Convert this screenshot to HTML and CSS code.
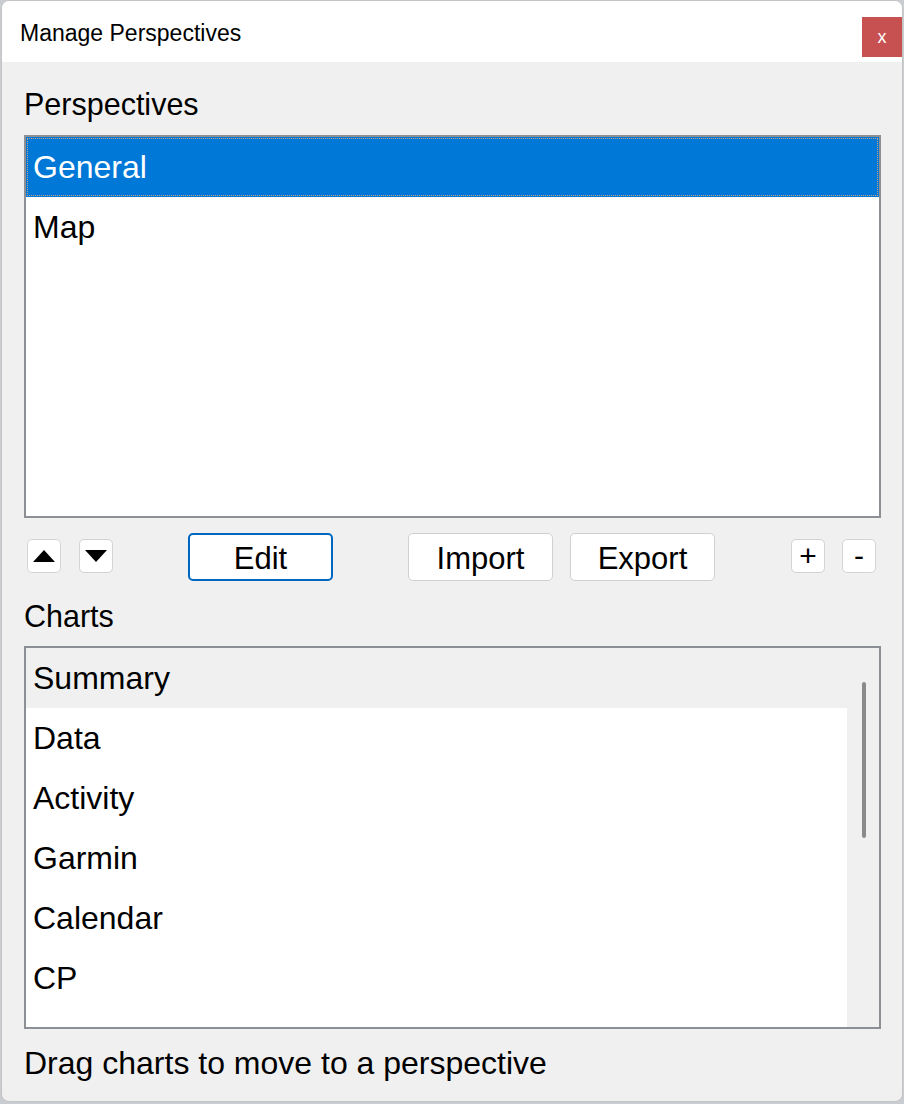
FILE: index.html
```html
<!DOCTYPE html>
<html>
<head>
<meta charset="utf-8">
<title>Manage Perspectives</title>
<link rel="stylesheet" href="styles.css">
</head>
<body>
<div class="window">
  <div class="titlebar">
    <span class="title">Manage Perspectives</span>
    <button class="close">x</button>
  </div>
  <div class="content">
    <div class="label label-top">Perspectives</div>
    <div class="listbox">
      <div class="row selected">General</div>
      <div class="row">Map</div>
    </div>
    <div class="toolbar">
      <button class="tiny btn-up"><svg width="22" height="12" viewBox="0 0 22 12"><path d="M0 12 L11 0 L22 12 Z" fill="#000"/></svg></button>
      <button class="tiny btn-down"><svg width="22" height="12" viewBox="0 0 22 12"><path d="M0 0 L22 0 L11 12 Z" fill="#000"/></svg></button>
      <button class="btn btn-edit">Edit</button>
      <button class="btn btn-import">Import</button>
      <button class="btn btn-export">Export</button>
      <button class="tiny btn-plus">+</button>
      <button class="tiny btn-minus">-</button>
    </div>
    <div class="label label-charts">Charts</div>
    <div class="listbox charts">
      <div class="rows">
        <div class="row hover">Summary</div>
        <div class="row">Data</div>
        <div class="row">Activity</div>
        <div class="row">Garmin</div>
        <div class="row">Calendar</div>
        <div class="row">CP</div>
      </div>
      <div class="scrollbar"><div class="thumb"></div></div>
    </div>
    <div class="footer">Drag charts to move to a perspective</div>
  </div>
</div>
</body>
</html>
```
FILE: styles.css
```css
html, body {
  margin: 0;
  padding: 0;
}
body {
  background: #c9ccd1;
  width: 904px;
  height: 1104px;
  overflow: hidden;
  font-family: "Segoe UI", "Liberation Sans", Arial, sans-serif;
  color: #000;
}
.window {
  box-sizing: border-box;
  width: 902px;
  height: 1102px;
  margin: 0 1px;
  border: 1px solid #c4c4c4;
  border-radius: 8px;
  background: #f0f0f0;
  overflow: hidden;
  display: flex;
  flex-direction: column;
}
.titlebar {
  height: 61px;
  background: #fff;
  display: flex;
  align-items: flex-start;
  justify-content: space-between;
  flex: none;
}
.title {
  font-size: 23px;
  margin: 20px 0 0 18px;
  line-height: 24px;
}
.close {
  width: 40px;
  height: 40px;
  margin: 16px 0 0 0;
  background: #c75050;
  border: none;
  color: #fff;
  font-size: 18px;
  line-height: 36px;
  padding: 0;
  font-family: "Liberation Sans", Arial, sans-serif;
}
.content {
  padding: 0 21px 0 22px;
  display: flex;
  flex-direction: column;
}
.label {
  font-size: 30.5px;
  line-height: 32px;
}
.label-top {
  padding: 26px 0 15px;
}
.listbox {
  box-sizing: border-box;
  border: 2px solid #8c8f94;
  background: #fff;
  height: 383px;
}
.row {
  height: 60px;
  box-sizing: border-box;
  font-size: 32px;
  line-height: 60px;
  padding-left: 7px;
}
.row.selected {
  background: #0078d7;
  color: #fff;
  outline: 1px dotted #c9a27a;
  outline-offset: -2px;
}
.row.hover {
  background: #f0f0f0;
}
.toolbar {
  height: 63px;
  display: flex;
  align-items: flex-start;
  padding-top: 15px;
  box-sizing: border-box;
}
button {
  font-family: inherit;
  color: #000;
  cursor: default;
}
.tiny {
  box-sizing: border-box;
  width: 34px;
  height: 34px;
  margin-top: 6px;
  background: #fff;
  border: 1px solid #d4d4d4;
  border-radius: 5px;
  padding: 0;
  display: flex;
  align-items: center;
  justify-content: center;
  font-size: 30px;
  line-height: 30px;
}
.btn {
  box-sizing: border-box;
  width: 145px;
  height: 48px;
  background: #fff;
  border: 1px solid #d0d0d0;
  border-radius: 5px;
  font-size: 31px;
  line-height: 40px;
  padding: 4px 0 0;
}
.btn-up { margin-left: 3px; }
.btn-down { margin-left: 18px; }
.btn-edit {
  margin-left: 75px;
  border: 2px solid #0067c0;
}
.btn-import { margin-left: 75px; }
.btn-export { margin-left: 17px; }
.btn-plus { margin-left: 76px; }
.btn-minus { margin-left: 17px; }
.label-charts {
  padding: 19px 0 14px;
}
.charts {
  display: flex;
}
.charts .rows {
  flex: 1;
}
.scrollbar {
  width: 32px;
  background: #f0f0f0;
  flex: none;
  display: flex;
  justify-content: center;
  padding-top: 34px;
  box-sizing: border-box;
}
.thumb {
  width: 4px;
  height: 156px;
  background: #8a8a8a;
  border-radius: 2px;
  margin-left: 1px;
}
.footer {
  font-size: 32px;
  line-height: 32px;
  padding-top: 18px;
}
```
